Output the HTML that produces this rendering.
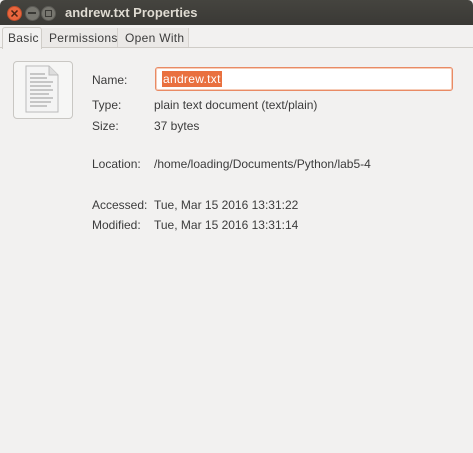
<!DOCTYPE html>
<html><head><style>
body{margin:0;width:473px;height:453px;background:#f2f1f0;font-family:"Liberation Sans",sans-serif;font-size:12px;color:#3c3c3c;position:relative;overflow:hidden}
.t{position:absolute;white-space:nowrap}
#tb{position:absolute;left:0;top:0;width:473px;height:25px;background:linear-gradient(#45443f,#3a3935);border-radius:5px 5px 0 0}
.btn{position:absolute;top:6px;width:13px;height:13px;border-radius:50%}
</style></head><body>
<div id="tb">
<div class="btn" style="left:7px;background:#e9663e;border:1px solid #c04e2b"></div>
<svg class="t" style="left:10px;top:9px" width="9" height="9"><path d="M1.5 1.5L7.5 7.5M7.5 1.5L1.5 7.5" stroke="#4a2414" stroke-width="1.5"/></svg>
<div class="btn" style="left:25px;background:#77766f;border:1px solid #5c5b56"></div>
<div class="t" style="left:28px;top:12px;width:8px;height:2px;background:#3a3935"></div>
<div class="btn" style="left:41px;background:#77766f;border:1px solid #5c5b56"></div>
<div class="t" style="left:45px;top:10px;width:5px;height:5px;border:1px solid #3a3935"></div>
<div class="t" style="left:65px;top:5px;color:#dfdbd2;font-weight:bold;font-size:13px">andrew.txt Properties</div>
</div>
<div class="t" style="left:0;top:47px;width:473px;height:1px;background:#cfccc7"></div>
<div class="t" style="left:2px;top:27px;width:38px;height:21px;background:#f2f1f0;border:1px solid #cfccc7;border-bottom:none;border-radius:3px 3px 0 0"></div>
<div class="t" style="left:8px;top:31px;letter-spacing:0.3px">Basic</div>
<div class="t" style="left:42px;top:28px;width:75px;height:19px;background:#ebe9e7;border-right:1px solid #d6d3cf"></div>
<div class="t" style="left:49px;top:31px;letter-spacing:0.3px">Permissions</div>
<div class="t" style="left:118px;top:28px;width:70px;height:19px;background:#ebe9e7;border-right:1px solid #d6d3cf"></div>
<div class="t" style="left:125px;top:31px;letter-spacing:0.3px">Open With</div>
<div class="t" style="left:13px;top:61px;width:58px;height:56px;background:#f6f6f5;border:1px solid #c9c7c3;border-radius:4px"></div>
<svg class="t" style="left:25px;top:65px" width="34" height="48"><path d="M1 1H24L33 10V47H1Z" fill="#f4f4f4" stroke="#bbb"/><path d="M24 1V10H33" fill="#ddd" stroke="#bbb"/><g stroke="#999" stroke-width="1"><path d="M5 9H20M5 13H22M5 17H28M5 21H26M5 25H28M5 29H24M5 33H28M5 37H26M5 41H22"/></g></svg>
<div class="t" style="left:92px;top:73px">Name:</div>
<div class="t" style="left:155px;top:67px;width:296px;height:22px;background:#fff;border:1px solid #e98a64;border-radius:3px;box-shadow:0 0 0 1px #f6cdb9 inset"></div>
<div class="t" style="left:162px;top:71px;background:#e9703f;color:#fff;padding:0 1px;height:16px;line-height:16px;letter-spacing:0.3px">andrew.txt</div>
<div class="t" style="left:92px;top:98px">Type:</div><div class="t" style="left:154px;top:98px">plain text document (text/plain)</div>
<div class="t" style="left:92px;top:119px">Size:</div><div class="t" style="left:154px;top:119px">37 bytes</div>
<div class="t" style="left:92px;top:157px">Location:</div><div class="t" style="left:154px;top:157px">/home/loading/Documents/Python/lab5-4</div>
<div class="t" style="left:92px;top:198px">Accessed:</div><div class="t" style="left:154px;top:198px">Tue, Mar 15 2016 13:31:22</div>
<div class="t" style="left:92px;top:218px">Modified:</div><div class="t" style="left:154px;top:218px">Tue, Mar 15 2016 13:31:14</div>
</body></html>
